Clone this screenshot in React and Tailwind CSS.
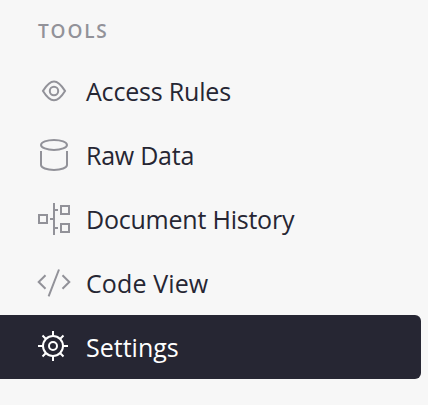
const EyeIcon = () => (
  <>
    <path d="M7 31.9C9.5 28 13.5 22.6 18 22.6S26.500 28 29 31.9C26.500 36 22.500 41.200 18 41.200S9.500 36 7 31.900Z" />
    <circle cx="18" cy="32" r="4.2" />
  </>
);

const DatabaseIcon = () => (
  <>
    <ellipse cx="18" cy="21.9" rx="13" ry="5" />
    <path d="M5 28v14c0 2.800 5.800 4.900 13 4.900s13-2.100 13-4.900V28" />
  </>
);

const HistoryIcon = () => (
  <>
    <path d="M3 28h8v8H3zM25 19h8v8h-8zM25 37h8v8h-8z" />
    <path d="M18 16v32M14 32h3M19 23h3M19 41h3" />
  </>
);

const CodeIcon = () => (
  <path d="M9.500 24.300L2.700 31l6.800 6.700M26.500 24.300l6.800 6.700-6.800 6.700M23 18.500L12.600 45.300" />
);

const GearIcon = () => (
  <>
    <circle cx="17" cy="31" r="10" />
    <circle cx="17" cy="31" r="4" />
    <path d="M17 16v5M17 41v5M2 31h5M27 31h5M6.500 20.500l3.500 3.500M24 38l3.500 3.500M27.500 20.500L24 24M10 38l-3.500 3.500" />
  </>
);

const items = [
  { label: 'Access Rules', Icon: EyeIcon, spacing: 'tracking-[-0.19px]' },
  { label: 'Raw Data', Icon: DatabaseIcon, spacing: 'tracking-[-0.25px]' },
  { label: 'Document History', Icon: HistoryIcon, spacing: 'tracking-[-0.22px]' },
  { label: 'Code View', Icon: CodeIcon, spacing: 'tracking-[0.12px]' },
  { label: 'Settings', Icon: GearIcon, spacing: 'tracking-[0px]', active: true },
];

export default function App() {
  return (
    <nav className="h-[405px] w-[428px] overflow-hidden bg-[#f7f7f7] pr-[7px] font-['Open_Sans','Noto_Sans',sans-serif]">
      <h2 className="flex h-[59px] items-center pl-[38px] pt-[3px] text-[19px] font-semibold leading-[59px] tracking-[1.85px] text-[#929299]">
        TOOLS
      </h2>
      <ul>
        {items.map(({ label, Icon, spacing, active }) => (
          <li
            key={label}
            className={`flex h-16 items-center gap-[14px] pl-9 ${active ? 'rounded-r-md bg-[#262633] text-white' : 'text-[#262633]'}`}
          >
            <svg
              viewBox="0 0 36 64"
              className={`h-16 w-9 shrink-0 ${active ? 'text-white' : 'text-[#929299]'}`}
              fill="none"
              stroke="currentColor"
              strokeWidth="2"
            >
              <Icon />
            </svg>
            <span className={`whitespace-nowrap text-[25px] leading-8 ${spacing}`}>{label}</span>
          </li>
        ))}
      </ul>
    </nav>
  );
}
